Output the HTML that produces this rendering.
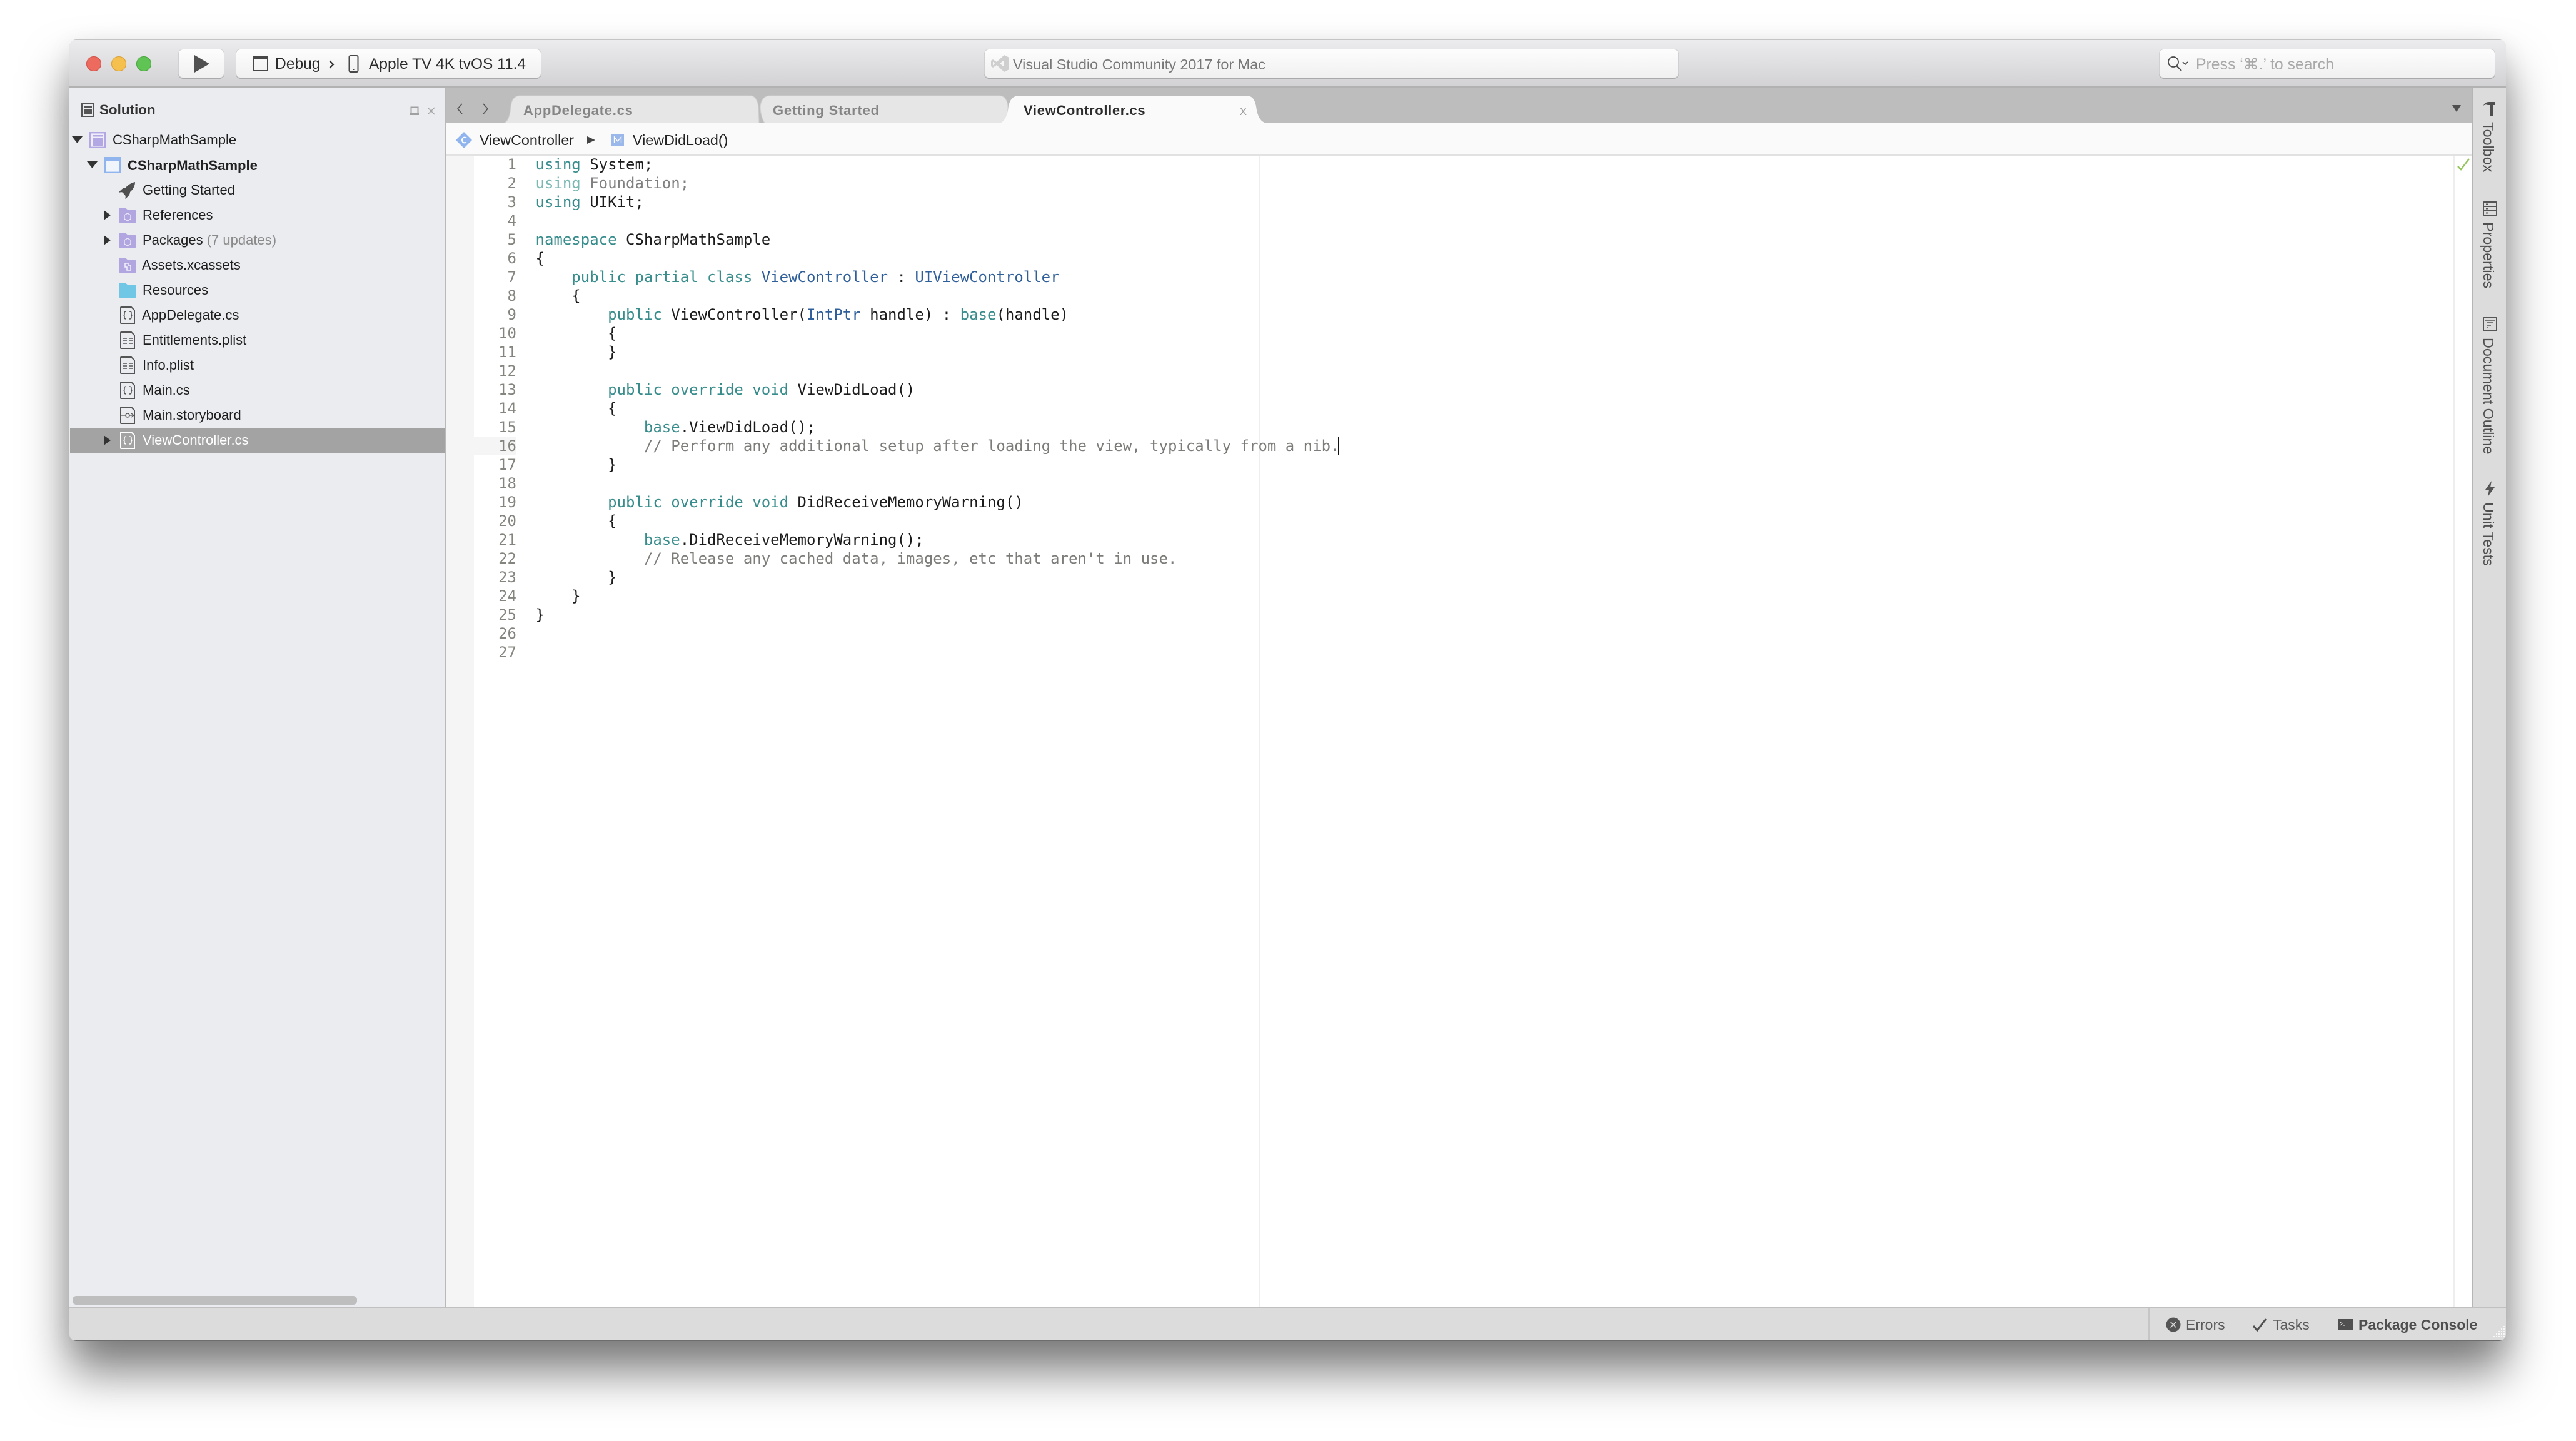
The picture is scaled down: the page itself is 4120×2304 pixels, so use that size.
<!DOCTYPE html>
<html><head><meta charset="utf-8"><title>Visual Studio for Mac</title>
<style>
html,body{margin:0;padding:0;width:4120px;height:2304px;background:#fff;overflow:hidden;font-family:"Liberation Sans",sans-serif}
#win{position:absolute;left:111px;top:63px;width:3897px;height:2081px;border-radius:11px;box-shadow:0 50px 75px rgba(0,0,0,.5),0 10px 40px rgba(0,0,0,.08);background:#dcdcdc}
#clip{position:absolute;left:0;top:0;width:3897px;height:2081px;border-radius:11px;overflow:hidden}
#in{position:absolute;left:-111px;top:-63px;width:4120px;height:2304px}
.a,.t,svg{position:absolute}
.t{white-space:pre;line-height:40px;font-size:22px;color:#1e1e1e}
.code{position:absolute;white-space:pre;font:24px/30px "DejaVu Sans Mono",monospace;color:#1c1c1c;font-variant-ligatures:none;margin:0}
.k{color:#378c8c}.b{color:#2f5f9b}.c{color:#7c7c79}
.btn{position:absolute;top:79px;height:45px;border-radius:7px;background:linear-gradient(#fdfdfd,#f0f0f0);box-shadow:0 0 0 1px #d0cfd1,0 1px 0 1px #a9a8aa;}
.v{position:absolute;writing-mode:vertical-rl;white-space:pre;font-size:23.300px;line-height:24px;color:#4f4f4f;left:3968px}
</style></head><body>
<div id="win"><div id="clip"><div id="in">
<!-- toolbar -->
<div class="a" style="left:111px;top:63px;width:3897px;height:76px;background:linear-gradient(#ecebed,#d2d1d3);border-top:1px solid #c4c4c4;box-sizing:border-box"></div>
<div class="a" style="left:111px;top:138px;width:3897px;height:2px;background:#b2b2b3"></div>
<div class="a" style="left:138px;top:90px;width:24px;height:24px;border-radius:50%;background:#ec6a5e;box-shadow:inset 0 0 0 1px #d0534a"></div>
<div class="a" style="left:178px;top:90px;width:24px;height:24px;border-radius:50%;background:#f5c04e;box-shadow:inset 0 0 0 1px #d8a03a"></div>
<div class="a" style="left:218px;top:90px;width:24px;height:24px;border-radius:50%;background:#5fc454;box-shadow:inset 0 0 0 1px #4aa540"></div>
<div class="btn" style="left:286px;width:72px"></div>
<svg style="left:311px;top:88px" width="24" height="28"><path d="M0 0L24 14L0 28Z" fill="#505050"/></svg>
<div class="btn" style="left:378px;width:487px"></div>
<svg style="left:403px;top:88px" width="28" height="27" fill="none"><rect x="2" y="2" width="23" height="23" stroke="#484848" stroke-width="2"/><rect x="2" y="1" width="23" height="5" fill="#484848"/></svg>
<div class="t" style="left:440px;top:83px;font-size:24.600px;color:#2a2a2a">Debug</div>
<svg style="left:525px;top:96px" width="10" height="14" fill="none"><path d="M2 1L8 7L2 13" stroke="#333" stroke-width="2.200"/></svg>
<svg style="left:557px;top:88px" width="18" height="28" fill="none"><rect x="1.500" y="1" width="14" height="26" rx="2" stroke="#484848" stroke-width="2"/><rect x="7.500" y="22" width="2" height="2" fill="#484848"/></svg>
<div class="t" style="left:590px;top:83px;font-size:24.500px;color:#2a2a2a">Apple TV 4K tvOS 11.4</div>
<div class="btn" style="left:1575px;width:1109px"></div>
<svg style="left:1585px;top:88px" width="29" height="27"><path d="M21 0L29 4V23L21 27L9 16L3 20L0 18V9L3 7L9 11ZM21 8L14 13.500L21 19ZM3 10.500V16.500L6 13.500Z" fill="#cfcfcf" fill-rule="evenodd"/></svg>
<div class="t" style="left:1620px;top:83px;font-size:23.400px;color:#777">Visual Studio Community 2017 for Mac</div>
<div class="btn" style="left:3454px;width:536px"></div>
<svg style="left:3466px;top:90px" width="36" height="24" fill="none" stroke="#4a4a4a"><circle cx="10" cy="9" r="8" stroke-width="1.800"/><path d="M15 15L23 23" stroke-width="2"/><path d="M25 9L29 13L33 9" stroke-width="1.600"/></svg>
<div class="t" style="left:3512px;top:84px;font-size:24.800px;color:#a9a9a9;font-family:'Liberation Sans','DejaVu Sans',sans-serif">Press ‘⌘.’ to search</div>

<!-- sidebar -->
<div class="a" style="left:111px;top:140px;width:601px;height:1950px;background:#ebecf0"></div>
<div class="a" style="left:712px;top:140px;width:2px;height:1950px;background:#b9b9b9"></div>
<svg style="left:129px;top:164px" width="23" height="24" fill="none"><rect x="2" y="2" width="19" height="20" stroke="#555" stroke-width="2"/><rect x="5" y="5" width="13" height="3" fill="#555"/><rect x="5" y="10" width="13" height="9" fill="#555"/></svg>
<div class="t" style="left:159px;top:156px;font-weight:bold;font-size:22.400px;color:#333">Solution</div>
<svg style="left:656px;top:170px" width="14" height="14" fill="none"><rect x="1.500" y="1.500" width="11" height="9.500" stroke="#a0a0a0" stroke-width="2"/><rect x="0" y="11" width="14" height="3" fill="#a0a0a0"/></svg>
<svg style="left:683px;top:171px" width="13" height="13" fill="none" stroke="#a6a6a6" stroke-width="1.500"><path d="M1 1L12 12M12 1L1 12"/></svg>

<svg style="left:115px;top:218px" width="17" height="11"><path d="M0 0H17L8.500 11Z" fill="#333"/></svg>
<svg style="left:143px;top:211px" width="26" height="26" fill="none"><rect x="1.200" y="1.200" width="23.600" height="23.600" stroke="#b3a8e3" stroke-width="2.400" fill="#f0eefa"/><rect x="5" y="5" width="16" height="2.500" fill="#b3a8e3"/><rect x="5" y="10" width="16" height="12" fill="#b3a8e3"/></svg>
<div class="t" style="left:180px;top:204px">CSharpMathSample</div>

<svg style="left:139px;top:258px" width="17" height="11"><path d="M0 0H17L8.500 11Z" fill="#333"/></svg>
<svg style="left:167px;top:251px" width="26" height="26" fill="none"><rect x="1.200" y="1.200" width="23.600" height="23.600" stroke="#90b4ee" stroke-width="2.400" fill="#f0f5fc"/><rect x="0" y="0" width="26" height="6" fill="#90b4ee"/></svg>
<div class="t" style="left:204px;top:245px;font-weight:bold;color:#222">CSharpMathSample</div>

<svg style="left:190px;top:291px" width="27" height="27"><path d="M26 0C21 1 15 4 11 9C8 9 4 11 0 17C3 16 5 16 7 17C7 18 9 20 10 21C11 23 11 24 10 27C16 23 18 19 18 16C23 12 26 6 26 0Z" fill="#4f4f4f"/></svg>
<div class="t" style="left:228px;top:284px">Getting Started</div>

<svg style="left:166px;top:336px" width="11" height="16"><path d="M0 0L11 8L0 16Z" fill="#333"/></svg>
<svg style="left:190px;top:332px" width="28" height="24"><path d="M0 2Q0 0 2 0H10L15 4H26Q28 4 28 6V22Q28 24 26 24H2Q0 24 0 22Z" fill="#b1a6df"/><path d="M14 9L19 12V18L14 21L9 18V12Z" fill="none" stroke="#efecf9" stroke-width="1.300"/></svg>
<div class="t" style="left:228px;top:324px">References</div>

<svg style="left:166px;top:376px" width="11" height="16"><path d="M0 0L11 8L0 16Z" fill="#333"/></svg>
<svg style="left:190px;top:372px" width="28" height="24"><path d="M0 2Q0 0 2 0H10L15 4H26Q28 4 28 6V22Q28 24 26 24H2Q0 24 0 22Z" fill="#b1a6df"/><path d="M14 9L19 12V18L14 21L9 18V12Z" fill="none" stroke="#efecf9" stroke-width="1.300"/></svg>
<div class="t" style="left:228px;top:364px">Packages <span style="color:#8a8a8a">(7 updates)</span></div>

<svg style="left:190px;top:412px" width="28" height="24"><path d="M0 2Q0 0 2 0H10L15 4H26Q28 4 28 6V22Q28 24 26 24H2Q0 24 0 22Z" fill="#b1a6df"/><path d="M10 9H15V12H19V20H13V15H10Z" fill="none" stroke="#f3f1fb" stroke-width="1.500"/></svg>
<div class="t" style="left:227px;top:404px">Assets.xcassets</div>

<svg style="left:190px;top:452px" width="28" height="24"><path d="M0 2Q0 0 2 0H10L15 4H26Q28 4 28 6V22Q28 24 26 24H2Q0 24 0 22Z" fill="#70c6e5"/></svg>
<div class="t" style="left:228px;top:444px">Resources</div>

<svg style="left:191px;top:489px" width="26" height="30" fill="none" stroke="#555" stroke-width="2"><path d="M3 2H19L24 7V28H3Q2 28 2 27V3Q2 2 3 2Z"/><path d="M11 9Q8 9 8 11V13Q8 15 6.500 15Q8 15 8 17V19Q8 21 11 21M16 9Q19 9 19 11V13Q19 15 20.500 15Q19 15 19 17V19Q19 21 16 21" stroke-width="1.500"/></svg>
<div class="t" style="left:227px;top:484px">AppDelegate.cs</div>

<svg style="left:191px;top:529px" width="26" height="30" fill="none" stroke="#555" stroke-width="2"><path d="M3 2H19L24 7V28H3Q2 28 2 27V3Q2 2 3 2Z"/><path d="M6 12H12M15 12H21M6 16H12M15 16H21M6 20H12M15 20H21" stroke-width="1.600"/></svg>
<div class="t" style="left:228px;top:524px">Entitlements.plist</div>

<svg style="left:191px;top:569px" width="26" height="30" fill="none" stroke="#555" stroke-width="2"><path d="M3 2H19L24 7V28H3Q2 28 2 27V3Q2 2 3 2Z"/><path d="M6 12H12M15 12H21M6 16H12M15 16H21M6 20H12M15 20H21" stroke-width="1.600"/></svg>
<div class="t" style="left:228px;top:564px">Info.plist</div>

<svg style="left:191px;top:609px" width="26" height="30" fill="none" stroke="#555" stroke-width="2"><path d="M3 2H19L24 7V28H3Q2 28 2 27V3Q2 2 3 2Z"/><path d="M11 9Q8 9 8 11V13Q8 15 6.500 15Q8 15 8 17V19Q8 21 11 21M16 9Q19 9 19 11V13Q19 15 20.500 15Q19 15 19 17V19Q19 21 16 21" stroke-width="1.500"/></svg>
<div class="t" style="left:228px;top:604px">Main.cs</div>

<svg style="left:191px;top:649px" width="26" height="30" fill="none" stroke="#555" stroke-width="2"><path d="M3 2H19L24 7V28H3Q2 28 2 27V3Q2 2 3 2Z"/><circle cx="13" cy="15" r="3" stroke-width="1.400"/><path d="M2 15H10M16 15H23M19 12L23 15L19 18" stroke-width="1.300"/></svg>
<div class="t" style="left:228px;top:644px">Main.storyboard</div>

<div class="a" style="left:112px;top:684px;width:600px;height:40px;background:#a3a3a3"></div>
<svg style="left:166px;top:696px" width="11" height="16"><path d="M0 0L11 8L0 16Z" fill="#333"/></svg>
<svg style="left:191px;top:689px" width="26" height="30" fill="none" stroke="#fff" stroke-width="2"><path d="M3 2H19L24 7V28H3Q2 28 2 27V3Q2 2 3 2Z"/><path d="M11 9Q8 9 8 11V13Q8 15 6.500 15Q8 15 8 17V19Q8 21 11 21M16 9Q19 9 19 11V13Q19 15 20.500 15Q19 15 19 17V19Q19 21 16 21" stroke-width="1.500"/></svg>
<div class="t" style="left:228px;top:684px;color:#fff">ViewController.cs</div>

<div class="a" style="left:116px;top:2072px;width:455px;height:14px;border-radius:6px;background:#bebebe"></div>

<!-- tab bar -->
<div class="a" style="left:714px;top:140px;width:3241px;height:57px;background:#bdbdbd"></div>
<svg style="left:727px;top:165px" width="60" height="18" fill="none" stroke="#555" stroke-width="1.600"><path d="M12 1L5 9L12 17M46 1L53 9L46 17"/></svg>
<svg style="left:0;top:0" width="2100" height="200">
<path d="M1223 197Q1216 185 1216 170Q1218 153 1232 153H1598Q1610 153 1612 170Q1612 190 1604 197Z" fill="#e6e6e6" stroke="#d0d0d0"/>
<path d="M805 197Q815 195 817 170Q819 153 832 153H1200Q1210 153 1213 170L1214 197Z" fill="#e6e6e6" stroke="#d0d0d0"/>
<path d="M1598 197Q1610 195 1613 170Q1616 153 1630 153H1994Q2006 153 2009 170Q2012 195 2026 197Z" fill="#fafafa"/>
</svg>
<div class="t" style="left:837px;top:157px;font-weight:bold;letter-spacing:.75px;color:#858585">AppDelegate.cs</div>
<div class="t" style="left:1236px;top:157px;font-weight:bold;letter-spacing:.8px;color:#858585">Getting Started</div>
<div class="t" style="left:1637px;top:157px;font-weight:bold;letter-spacing:.65px;color:#2c2c2c">ViewController.cs</div>
<svg style="left:1983px;top:172px" width="11" height="12" fill="none" stroke="#999" stroke-width="1.400"><path d="M1 0L10 12M10 0L1 12"/></svg>
<svg style="left:3922px;top:168px" width="14" height="11"><path d="M0 0H14L7 11Z" fill="#505050"/></svg>

<!-- breadcrumb -->
<div class="a" style="left:714px;top:197px;width:3240px;height:50px;background:#fafafa"></div>
<div class="a" style="left:714px;top:247px;width:3240px;height:2px;background:#e2e2e2"></div>
<svg style="left:729px;top:211px" width="26" height="26"><path d="M13 0L26 13L13 26L0 13Z" fill="#8fb4ee"/><path d="M17 9.500Q13 7.500 11 10Q9 13 11 16Q13 18.500 17 16.500" fill="none" stroke="#fff" stroke-width="2"/></svg>
<div class="t" style="left:767px;top:204px;font-size:23.300px;color:#222">ViewController</div>
<svg style="left:939px;top:218px" width="13" height="12"><path d="M0 0L13 6L0 12Z" fill="#444"/></svg>
<svg style="left:978px;top:214px" width="20" height="20"><rect width="20" height="20" fill="#9bb8ea"/><path d="M4.500 15V5L10 12L15.500 5V15" fill="none" stroke="#fff" stroke-width="1.300"/></svg>
<div class="t" style="left:1012px;top:204px;font-size:23.300px;color:#222">ViewDidLoad()</div>

<!-- editor -->
<div class="a" style="left:714px;top:249px;width:3240px;height:1841px;background:#fff"></div>
<div class="a" style="left:714px;top:249px;width:44px;height:1841px;background:#f5f5f5"></div>
<div class="a" style="left:757px;top:698px;width:69px;height:30px;background:#f5f5f5"></div>
<div class="a" style="left:2013px;top:249px;width:2px;height:1841px;background:#eeeeee"></div>
<div class="a" style="left:3924px;top:249px;width:2px;height:1841px;background:#eeeeee"></div>
<svg style="left:3930px;top:253px" width="20" height="20" fill="none"><path d="M1 13L6 18L19 1" stroke="#94c45a" stroke-width="2.400"/></svg>
<pre class="code" style="left:726px;top:248px;width:100px;text-align:right;color:#85857f">1
2
3
4
5
6
7
8
9
10
11
12
13
14
15
16
17
18
19
20
21
22
23
24
25
26
27</pre>
<pre class="code" style="left:856.500px;top:248px"><span class="k">using</span> System;
<span style="color:#7ab8b4">using</span> <span style="color:#808080">Foundation;</span>
<span class="k">using</span> UIKit;

<span class="k">namespace</span> CSharpMathSample
{
    <span class="k">public partial class</span> <span class="b">ViewController</span> : <span class="b">UIViewController</span>
    {
        <span class="k">public</span> ViewController(<span class="b">IntPtr</span> handle) : <span class="k">base</span>(handle)
        {
        }

        <span class="k">public override void</span> ViewDidLoad()
        {
            <span class="k">base</span>.ViewDidLoad();
            <span class="c">// Perform any additional setup after loading the view, typically from a nib.</span>
        }

        <span class="k">public override void</span> DidReceiveMemoryWarning()
        {
            <span class="k">base</span>.DidReceiveMemoryWarning();
            <span class="c">// Release any cached data, images, etc that aren't in use.</span>
        }
    }
}</pre>
<div class="a" style="left:2140px;top:699px;width:2px;height:28px;background:#111"></div>

<!-- right strip -->
<div class="a" style="left:3954px;top:140px;width:2px;height:1950px;background:#b5b5b5"></div>
<div class="a" style="left:3956px;top:140px;width:52px;height:1950px;background:#dcdcdc"></div>
<svg style="left:3971px;top:162px" width="22" height="25"><path d="M1 7Q3 1 10 1H20V6H16V24H11V6H8Q4 4 1 7Z" fill="#4f4f4f"/></svg>
<div class="v" style="top:195px">Toolbox</div>
<svg style="left:3971px;top:322px" width="23" height="23" fill="none" stroke="#555" stroke-width="2"><rect x="1" y="1" width="21" height="21" rx="1"/><path d="M1 8H22M1 15H22"/><path d="M5 4.500H8M5 11.500H8M5 18.500H8" stroke-width="2"/></svg>
<div class="v" style="top:355px">Properties</div>
<svg style="left:3971px;top:507px" width="23" height="23" fill="none" stroke="#555" stroke-width="2"><rect x="1" y="1" width="21" height="21" rx="1"/><path d="M4 5H19M6 9H17M6 13H13M6 17H8" stroke-width="1.500"/></svg>
<div class="v" style="top:540px">Document Outline</div>
<svg style="left:3975px;top:769px" width="15" height="25"><path d="M10 0L0 14H6L4 25L15 10H8Z" fill="#555"/></svg>
<div class="v" style="top:803px">Unit Tests</div>

<!-- status bar -->
<div class="a" style="left:111px;top:2090px;width:3897px;height:2px;background:#c0c0c0"></div>
<div class="a" style="left:111px;top:2092px;width:3897px;height:52px;background:#dcdcdc"></div>
<div class="a" style="left:3436px;top:2092px;width:2px;height:52px;background:#c6c6c6"></div>
<svg style="left:3464px;top:2106px" width="24" height="24"><circle cx="12" cy="12" r="11.500" fill="#555"/><path d="M7.500 7.500L16.500 16.500M16.500 7.500L7.500 16.500" stroke="#ddd" stroke-width="1.400"/></svg>
<div class="t" style="left:3496px;top:2098px;font-size:23px;color:#5c5c5c">Errors</div>
<svg style="left:3603px;top:2108px" width="23" height="21" fill="none"><path d="M1 12L7 19L21 1" stroke="#505050" stroke-width="3"/></svg>
<div class="t" style="left:3635px;top:2098px;font-size:23px;color:#5c5c5c">Tasks</div>
<svg style="left:3740px;top:2109px" width="24" height="18"><rect width="24" height="18" fill="#505050"/><path d="M3 5L6 7.500L3 10M7 10H11" fill="none" stroke="#eee" stroke-width="1"/></svg>
<div class="t" style="left:3772px;top:2098px;font-size:23px;font-weight:bold;color:#4f4f4f">Package Console</div>
<svg style="left:3984px;top:2120px" width="24" height="24" fill="#f8f8f8"><path d="M20 0h2v2h-2zM16 4h2v2h-2zM20 4h2v2h-2zM12 8h2v2h-2zM16 8h2v2h-2zM20 8h2v2h-2zM8 12h2v2h-2zM12 12h2v2h-2zM16 12h2v2h-2zM20 12h2v2h-2zM4 16h2v2h-2zM8 16h2v2h-2zM12 16h2v2h-2zM16 16h2v2h-2zM20 16h2v2h-2z"/></svg>
<div class="a" style="left:111px;top:2143px;width:3897px;height:1px;background:#6e6e6e"></div>
</div></div></div>
</body></html>
